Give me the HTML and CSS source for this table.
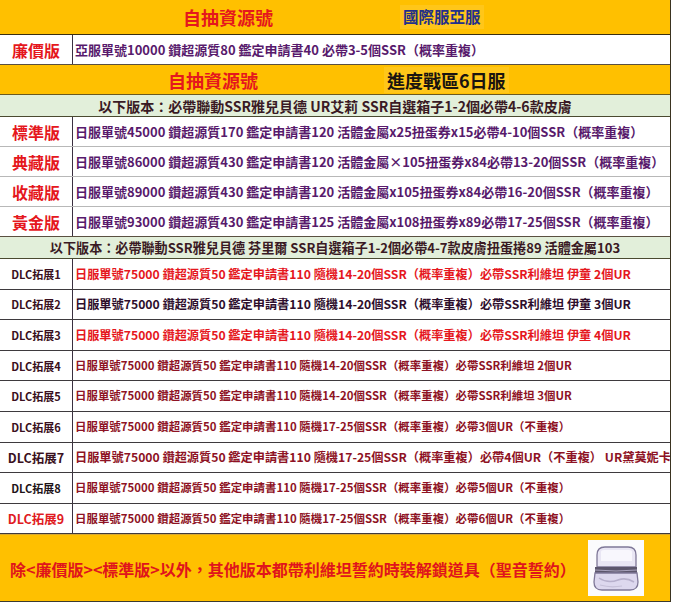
FILE: index.html
```html
<!DOCTYPE html>
<html lang="zh-Hant">
<head>
<meta charset="utf-8">
<link rel="stylesheet" href="styles.css">
</head>
<body>
<div class="sheet">
  <div class="row head head1">
    <span class="title red">自抽資源號</span>
    <span class="sub navy">國際服亞服</span>
  </div>
  <div class="row item">
    <div class="label red">廉價版</div>
    <div class="text purple">亞服單號10000 鑽超源質80 鑑定申請書40 必帶3-5個SSR（概率重複）</div>
  </div>
  <div class="row head head2">
    <span class="title red">自抽資源號</span>
    <span class="sub black">進度戰區6日服</span>
  </div>
  <div class="row note note1">以下版本：必帶聯動SSR雅兒貝德 UR艾莉 SSR自選箱子1-2個必帶4-6款皮膚</div>
  <div class="row item light">
    <div class="label red">標準版</div>
    <div class="text purple">日服單號45000 鑽超源質170 鑑定申請書120 活體金屬x25扭蛋券x15必帶4-10個SSR（概率重複）</div>
  </div>
  <div class="row item light">
    <div class="label red">典藏版</div>
    <div class="text purple">日服單號86000 鑽超源質430 鑑定申請書120 活體金屬×105扭蛋券x84必帶13-20個SSR（概率重複）</div>
  </div>
  <div class="row item light">
    <div class="label red">收藏版</div>
    <div class="text purple">日服單號89000 鑽超源質430 鑑定申請書120 活體金屬x105扭蛋券x84必帶16-20個SSR（概率重複）</div>
  </div>
  <div class="row item light last">
    <div class="label red">黃金版</div>
    <div class="text purple">日服單號93000 鑽超源質430 鑑定申請書125 活體金屬x108扭蛋券x89必帶17-25個SSR（概率重複）</div>
  </div>
  <div class="row note note2">以下版本：必帶聯動SSR雅兒貝德 芬里爾 SSR自選箱子1-2個必帶4-7款皮膚扭蛋捲89 活體金屬103</div>
  <div class="row dlc">
    <div class="label dl-dark">DLC拓展1</div>
    <div class="text red">日服單號75000 鑽超源質50 鑑定申請書110 隨機14-20個SSR（概率重複）必帶SSR利維坦 伊童 2個UR</div>
  </div>
  <div class="row dlc">
    <div class="label dl-dark">DLC拓展2</div>
    <div class="text nearblack">日服單號75000 鑽超源質50 鑑定申請書110 隨機14-20個SSR（概率重複）必帶SSR利維坦 伊童 3個UR</div>
  </div>
  <div class="row dlc">
    <div class="label dl-dark">DLC拓展3</div>
    <div class="text red">日服單號75000 鑽超源質50 鑑定申請書110 隨機14-20個SSR（概率重複）必帶SSR利維坦 伊童 4個UR</div>
  </div>
  <div class="row dlc">
    <div class="label dl-dark">DLC拓展4</div>
    <div class="text maroon thin">日服單號75000 鑽超源質50 鑑定申請書110 隨機14-20個SSR（概率重複）必帶SSR利維坦 2個UR</div>
  </div>
  <div class="row dlc">
    <div class="label dl-dark">DLC拓展5</div>
    <div class="text maroon thin">日服單號75000 鑽超源質50 鑑定申請書110 隨機14-20個SSR（概率重複）必帶SSR利維坦 3個UR</div>
  </div>
  <div class="row dlc">
    <div class="label dl-dark">DLC拓展6</div>
    <div class="text maroon thin">日服單號75000 鑽超源質50 鑑定申請書110 隨機17-25個SSR（概率重複）必帶3個UR（不重複）</div>
  </div>
  <div class="row dlc">
    <div class="label dl-dark big">DLC拓展7</div>
    <div class="text maroon">日服單號75000 鑽超源質50 鑑定申請書110 隨機17-25個SSR（概率重複）必帶4個UR（不重複） UR黛莫妮卡</div>
  </div>
  <div class="row dlc">
    <div class="label dl-black">DLC拓展8</div>
    <div class="text maroon thin">日服單號75000 鑽超源質50 鑑定申請書110 隨機17-25個SSR（概率重複）必帶5個UR（不重複）</div>
  </div>
  <div class="row dlc">
    <div class="label dl-red big">DLC拓展9</div>
    <div class="text maroon thin">日服單號75000 鑽超源質50 鑑定申請書110 隨機17-25個SSR（概率重複）必帶6個UR（不重複）</div>
  </div>
  <div class="row footer">
    <div class="foot-text">除&lt;廉價版&gt;&lt;標準版&gt;以外，其他版本都帶利維坦誓約時裝解鎖道具（聖音誓約）</div>
    <div class="icon">
      <svg width="56" height="56" viewBox="0 0 56 56">
        <rect x="0" y="0" width="56" height="56" fill="#fbfbfd"/>
        <path d="M9 15 Q9 7 17 7 L40 7 Q48 7 48 15 L48 27 L9 27 Z" fill="#e9e6f4" stroke="#7f7898" stroke-width="1.3"/>
        <path d="M13 12 Q13 10 16 10 L41 10 Q44 10 44 12 L44 21 L13 21 Z" fill="#f8f7fd"/>
        <path d="M7 27 L49 27 L49 33 L7 33 Z" fill="#5c566c"/>
        <path d="M7 30 Q28 32 49 30" stroke="#a8a2bc" stroke-width="1" fill="none"/>
        <path d="M7 33 L49 33 L50 42 Q50 50 42 50 L14 50 Q6 50 6 42 Z" fill="#ddd8ee" stroke="#7f7898" stroke-width="1.3"/>
        <path d="M11 38 Q20 44 30 40 Q38 37 46 42" stroke="#b7b0cc" stroke-width="1.5" fill="none"/>
        <path d="M12 45 Q22 48 34 46" stroke="#c6c0d8" stroke-width="1.2" fill="none"/>
      </svg>
    </div>
  </div>
</div>
</body>
</html>
```
FILE: styles.css
```css
* { box-sizing: border-box; }
html, body { margin: 0; padding: 0; background: #ffffff; }
body {
  font-family: "Noto Sans CJK TC", "Noto Sans CJK SC", "Noto Sans", sans-serif;
  font-weight: 700;
  width: 673px;
  height: 605px;
  overflow: hidden;
}
.sheet {
  width: 671px;
  border-right: 1px solid #3a3320;
  display: flex;
  flex-direction: column;
}
.row {
  display: flex;
  align-items: center;
  white-space: nowrap;
  overflow: hidden;
}
.head {
  background: #ffc000;
  border-bottom: 1px solid #3a2f10;
}
.head1 { height: 35px; padding-left: 183px; gap: 127px; }
.head2 { height: 30px; padding-left: 168px; gap: 126px; border-bottom-color: #6b5a20; }
.title { font-size: 18px; line-height: 1; }
.sub { font-size: 15.5px; line-height: 1; padding: 4px 3px; background: #ffc619; }
.head2 .sub { font-size: 18px; }
.red { color: #e5171d; }
.navy { color: #23308a; }
.black { color: #1a1410; }
.purple { color: #581a6c; }
.nearblack { color: #2e0e2c; }
.maroon { color: #8e1224; }
.item {
  height: 30px;
  border-bottom: 1px solid #5a5040;
}
.item.light { border-bottom-color: #b8b8b8; }
.item.light.last { border-bottom-color: #5a5040; }
.label {
  width: 73px;
  flex: none;
  height: 100%;
  display: flex;
  align-items: center;
  justify-content: center;
  border-right: 1px solid #3a3040;
  font-size: 16px;
}
.text {
  padding-left: 2px;
  font-size: 13px;
  line-height: 1;
}
.note {
  height: 22px;
  background: #e2efda;
  border-bottom: 1px solid #4a4a30;
  justify-content: center;
  color: #3a1a24;
}
.note1 { font-size: 14px; }
.note2 { font-size: 13.1px; }
.dlc {
  height: 30.6px;
  border-bottom: 1px solid #3e3a3e;
}
.dlc .label { font-size: 11px; }
.dlc .label.big { font-size: 12.5px; }
.dlc .text { font-size: 12.2px; }
.dlc .text.thin { font-size: 11.4px; letter-spacing: 0.05px; }
.dl-dark { color: #3a1020; }
.dl-black { color: #1e1418; }
.dl-red { color: #e01a22; }
.footer {
  height: 68px;
  background: #ffc000;
  border-bottom: 1px solid #3a3a30;
  border-top: 1px solid #d8a830;
  padding-left: 10px;
  padding-right: 26px;
  justify-content: space-between;
}
.foot-text {
  font-size: 16px;
  color: #e0141c;
  padding-top: 2px;
}
.icon {
  width: 56px;
  height: 56px;
  display: flex;
}
```
